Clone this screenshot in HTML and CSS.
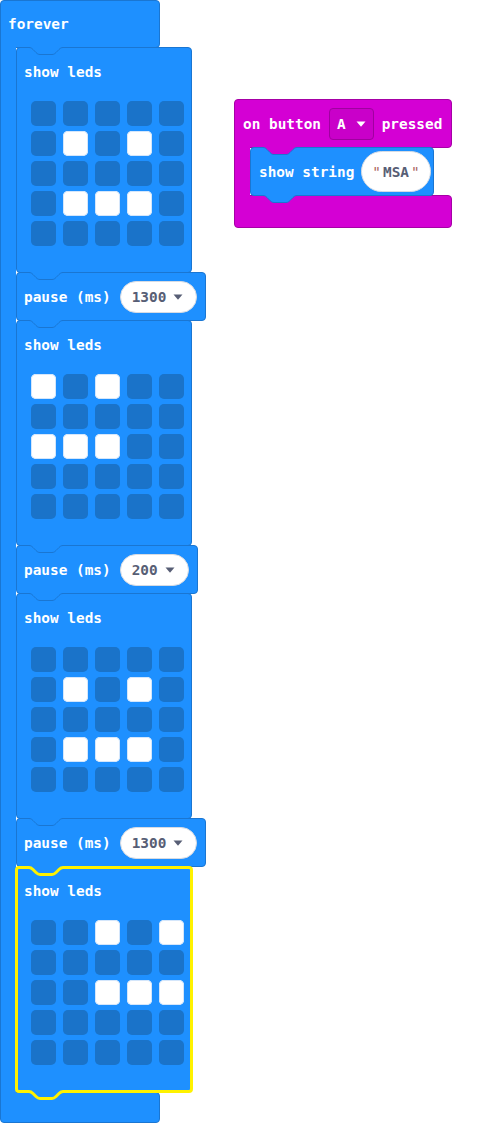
FILE: index.html
```html
<!DOCTYPE html>
<html lang="en">
<head>
  <meta charset="UTF-8" />
  <title>Blocks</title>
  <link rel="stylesheet" href="styles.css">
</head>
<body>
  <div class="workspace">

    <div class="c-block forever">
      <div class="c-head"><span>forever</span></div>
      <div class="c-body">
        <div class="c-arm"></div>
        <div class="stack">

          <div class="stmt leds-block">
            <svg class="notch" width="34" height="9"><path class="n-fill" d="M0,0 V0.5 C2,0.5 3,1.5 4,2.5 L7,5.5 C8,6.5 9,7.5 11,7.5 H23 C25,7.5 26,6.5 27,5.5 L30,2.5 C31,1.5 32,0.5 34,0.5 V0 Z"/><path class="n-line" d="M0,0.5 C2,0.5 3,1.5 4,2.5 L7,5.5 C8,6.5 9,7.5 11,7.5 H23 C25,7.5 26,6.5 27,5.5 L30,2.5 C31,1.5 32,0.5 34,0.5"/></svg>
            <div class="label">show leds</div>
            <div class="leds">
              <i class="led"></i><i class="led"></i><i class="led"></i><i class="led"></i><i class="led"></i>
              <i class="led"></i><i class="led on"></i><i class="led"></i><i class="led on"></i><i class="led"></i>
              <i class="led"></i><i class="led"></i><i class="led"></i><i class="led"></i><i class="led"></i>
              <i class="led"></i><i class="led on"></i><i class="led on"></i><i class="led on"></i><i class="led"></i>
              <i class="led"></i><i class="led"></i><i class="led"></i><i class="led"></i><i class="led"></i>
            </div>
          </div>

          <div class="stmt pause-block">
            <svg class="notch" width="34" height="9"><path class="n-fill" d="M0,0 V0.5 C2,0.5 3,1.5 4,2.5 L7,5.5 C8,6.5 9,7.5 11,7.5 H23 C25,7.5 26,6.5 27,5.5 L30,2.5 C31,1.5 32,0.5 34,0.5 V0 Z"/><path class="n-line" d="M0,0.5 C2,0.5 3,1.5 4,2.5 L7,5.5 C8,6.5 9,7.5 11,7.5 H23 C25,7.5 26,6.5 27,5.5 L30,2.5 C31,1.5 32,0.5 34,0.5"/></svg>
            <span class="label">pause (ms)</span>
            <span class="pill num">1300<svg class="caret" width="10" height="6"><path d="M0.5,0.5 H9.5 L5,5.8 Z"/></svg></span>
          </div>

          <div class="stmt leds-block">
            <svg class="notch" width="34" height="9"><path class="n-fill" d="M0,0 V0.5 C2,0.5 3,1.5 4,2.5 L7,5.5 C8,6.5 9,7.5 11,7.5 H23 C25,7.5 26,6.5 27,5.5 L30,2.5 C31,1.5 32,0.5 34,0.5 V0 Z"/><path class="n-line" d="M0,0.5 C2,0.5 3,1.5 4,2.5 L7,5.5 C8,6.5 9,7.5 11,7.5 H23 C25,7.5 26,6.5 27,5.5 L30,2.5 C31,1.5 32,0.5 34,0.5"/></svg>
            <div class="label">show leds</div>
            <div class="leds">
              <i class="led on"></i><i class="led"></i><i class="led on"></i><i class="led"></i><i class="led"></i>
              <i class="led"></i><i class="led"></i><i class="led"></i><i class="led"></i><i class="led"></i>
              <i class="led on"></i><i class="led on"></i><i class="led on"></i><i class="led"></i><i class="led"></i>
              <i class="led"></i><i class="led"></i><i class="led"></i><i class="led"></i><i class="led"></i>
              <i class="led"></i><i class="led"></i><i class="led"></i><i class="led"></i><i class="led"></i>
            </div>
          </div>

          <div class="stmt pause-block">
            <svg class="notch" width="34" height="9"><path class="n-fill" d="M0,0 V0.5 C2,0.5 3,1.5 4,2.5 L7,5.5 C8,6.5 9,7.5 11,7.5 H23 C25,7.5 26,6.5 27,5.5 L30,2.5 C31,1.5 32,0.5 34,0.5 V0 Z"/><path class="n-line" d="M0,0.5 C2,0.5 3,1.5 4,2.5 L7,5.5 C8,6.5 9,7.5 11,7.5 H23 C25,7.5 26,6.5 27,5.5 L30,2.5 C31,1.5 32,0.5 34,0.5"/></svg>
            <span class="label">pause (ms)</span>
            <span class="pill num">200<svg class="caret" width="10" height="6"><path d="M0.5,0.5 H9.5 L5,5.8 Z"/></svg></span>
          </div>

          <div class="stmt leds-block">
            <svg class="notch" width="34" height="9"><path class="n-fill" d="M0,0 V0.5 C2,0.5 3,1.5 4,2.5 L7,5.5 C8,6.5 9,7.5 11,7.5 H23 C25,7.5 26,6.5 27,5.5 L30,2.5 C31,1.5 32,0.5 34,0.5 V0 Z"/><path class="n-line" d="M0,0.5 C2,0.5 3,1.5 4,2.5 L7,5.5 C8,6.5 9,7.5 11,7.5 H23 C25,7.5 26,6.5 27,5.5 L30,2.5 C31,1.5 32,0.5 34,0.5"/></svg>
            <div class="label">show leds</div>
            <div class="leds">
              <i class="led"></i><i class="led"></i><i class="led"></i><i class="led"></i><i class="led"></i>
              <i class="led"></i><i class="led on"></i><i class="led"></i><i class="led on"></i><i class="led"></i>
              <i class="led"></i><i class="led"></i><i class="led"></i><i class="led"></i><i class="led"></i>
              <i class="led"></i><i class="led on"></i><i class="led on"></i><i class="led on"></i><i class="led"></i>
              <i class="led"></i><i class="led"></i><i class="led"></i><i class="led"></i><i class="led"></i>
            </div>
          </div>

          <div class="stmt pause-block">
            <svg class="notch" width="34" height="9"><path class="n-fill" d="M0,0 V0.5 C2,0.5 3,1.5 4,2.5 L7,5.5 C8,6.5 9,7.5 11,7.5 H23 C25,7.5 26,6.5 27,5.5 L30,2.5 C31,1.5 32,0.5 34,0.5 V0 Z"/><path class="n-line" d="M0,0.5 C2,0.5 3,1.5 4,2.5 L7,5.5 C8,6.5 9,7.5 11,7.5 H23 C25,7.5 26,6.5 27,5.5 L30,2.5 C31,1.5 32,0.5 34,0.5"/></svg>
            <span class="label">pause (ms)</span>
            <span class="pill num">1300<svg class="caret" width="10" height="6"><path d="M0.5,0.5 H9.5 L5,5.8 Z"/></svg></span>
          </div>

          <div class="stmt leds-block selected">
            <svg class="notch" width="34" height="11"><path class="n-fill" d="M0,0 V1.5 C2,1.5 3,2.5 4,3.5 L7,6.5 C8,7.5 9,8.5 11,8.5 H23 C25,8.5 26,7.5 27,6.5 L30,3.5 C31,2.5 32,1.5 34,1.5 V0 Z"/><path class="n-line" d="M0,1.5 C2,1.5 3,2.5 4,3.5 L7,6.5 C8,7.5 9,8.5 11,8.5 H23 C25,8.5 26,7.5 27,6.5 L30,3.5 C31,2.5 32,1.5 34,1.5"/></svg>
            <div class="label">show leds</div>
            <div class="leds">
              <i class="led"></i><i class="led"></i><i class="led on"></i><i class="led"></i><i class="led on"></i>
              <i class="led"></i><i class="led"></i><i class="led"></i><i class="led"></i><i class="led"></i>
              <i class="led"></i><i class="led"></i><i class="led on"></i><i class="led on"></i><i class="led on"></i>
              <i class="led"></i><i class="led"></i><i class="led"></i><i class="led"></i><i class="led"></i>
              <i class="led"></i><i class="led"></i><i class="led"></i><i class="led"></i><i class="led"></i>
            </div>
            <svg class="tab" width="34" height="11"><path class="n-fill" d="M0,0 V1.5 C2,1.5 3,2.5 4,3.5 L7,6.5 C8,7.5 9,8.5 11,8.5 H23 C25,8.5 26,7.5 27,6.5 L30,3.5 C31,2.5 32,1.5 34,1.5 V0 Z"/><path class="n-line" d="M0,1.5 C2,1.5 3,2.5 4,3.5 L7,6.5 C8,7.5 9,8.5 11,8.5 H23 C25,8.5 26,7.5 27,6.5 L30,3.5 C31,2.5 32,1.5 34,1.5"/></svg>
          </div>

        </div>
      </div>
      <div class="c-foot"></div>
    </div>

    <div class="c-block event">
      <div class="c-head">
        <span>on button</span>
        <span class="dropdown">A<svg class="caret" width="10" height="6"><path d="M0.5,0.5 H9.5 L5,5.8 Z"/></svg></span>
        <span>pressed</span>
      </div>
      <div class="c-body">
        <div class="c-arm"></div>
        <div class="stack">
          <div class="stmt string-block">
            <svg class="notch" width="34" height="9"><path class="n-fill" d="M0,0 V0.5 C2,0.5 3,1.5 4,2.5 L7,5.5 C8,6.5 9,7.5 11,7.5 H23 C25,7.5 26,6.5 27,5.5 L30,2.5 C31,1.5 32,0.5 34,0.5 V0 Z"/><path class="n-line" d="M0,0.5 C2,0.5 3,1.5 4,2.5 L7,5.5 C8,6.5 9,7.5 11,7.5 H23 C25,7.5 26,6.5 27,5.5 L30,2.5 C31,1.5 32,0.5 34,0.5"/></svg>
            <span class="label">show string</span>
            <span class="pill str"><span class="quote">"</span>MSA<span class="quote">"</span></span>
            <svg class="tab" width="34" height="9"><path class="n-fill" d="M0,0 V0.5 C2,0.5 3,1.5 4,2.5 L7,5.5 C8,6.5 9,7.5 11,7.5 H23 C25,7.5 26,6.5 27,5.5 L30,2.5 C31,1.5 32,0.5 34,0.5 V0 Z"/><path class="n-line" d="M0,0.5 C2,0.5 3,1.5 4,2.5 L7,5.5 C8,6.5 9,7.5 11,7.5 H23 C25,7.5 26,6.5 27,5.5 L30,2.5 C31,1.5 32,0.5 34,0.5"/></svg>
          </div>
        </div>
      </div>
      <div class="c-foot"></div>
    </div>

  </div>
</body>
</html>
```

FILE: styles.css
```css
:root {
  --blue: #1e90ff;
  --blue-edge: #1a76d2;
  --led-off: #1a73c9;
  --pink: #d400d4;
  --pink-edge: #a600a6;
  --field-text: #575e75;
  --select: #fff200;
}

body {
  margin: 0;
  background: #fff;
  font-family: "DejaVu Sans Mono", "Liberation Mono", monospace;
  font-size: 14.4px;
  font-weight: bold;
  color: #fff;
}

.workspace {
  position: relative;
  width: 487px;
  height: 1124px;
  overflow: hidden;
}

/* top level blocks sit on the canvas */
.c-block {
  position: absolute;
  display: flex;
  flex-direction: column;
  align-items: flex-start;
}

.forever {
  left: 0;
  top: 0;
  --fill: var(--blue);
  --edge: var(--blue-edge);
}

.event {
  left: 234px;
  top: 99px;
  --fill: var(--pink);
  --edge: var(--pink-edge);
}

.c-head,
.c-foot {
  box-sizing: border-box;
  background: var(--fill);
  border: 1px solid var(--edge);
}

.c-head {
  display: flex;
  align-items: center;
  gap: 8px;
  height: 48px;
  padding: 0 7px;
  border-radius: 4px 4px 4px 0;
}

.forever .c-head { width: 160px; }

.event .c-head {
  width: 218px;
  height: 49px;
  padding: 0 8px;
}

.c-body {
  display: flex;
  margin-top: -1px;
}

.c-arm {
  position: relative;
  width: 16px;
  box-sizing: border-box;
  background: var(--fill);
  border-left: 1px solid var(--edge);
}

.stack {
  display: flex;
  flex-direction: column;
  align-items: flex-start;
}

.c-foot {
  margin-top: -1px;
  border-radius: 0 4px 4px 4px;
}

.forever .c-foot {
  width: 160px;
  height: 31px;
}

.event .c-foot {
  width: 218px;
  height: 33px;
}

/* statement blocks */
.stmt {
  position: relative;
  z-index: 1;
  box-sizing: border-box;
  background: var(--blue);
  border: 1px solid var(--blue-edge);
  border-radius: 4px;
}

.stmt + .stmt { margin-top: -1px; }

.notch,
.tab {
  position: absolute;
  left: 12px;
  overflow: visible;
}

.notch { top: -1px; }
.tab { top: 100%; }

.n-fill { fill: var(--fill); }
.n-line {
  fill: none;
  stroke: var(--blue-edge);
  stroke-width: 1;
}

.tab .n-fill { fill: var(--blue); }

.label {
  line-height: 18px;
  white-space: nowrap;
}

.leds-block {
  width: 176px;
  height: 226px;
  padding: 15px 7px 0;
}

.leds-block.selected {
  width: 178px;
  height: 227px;
  margin-left: -1px;
  padding: 13px 6px 0;
  border: 3px solid var(--select);
}

.selected .notch { top: -3px; left: 11px; }
.selected .tab { left: 11px; }
.selected .n-line {
  stroke: var(--select);
  stroke-width: 3;
}

.leds {
  display: grid;
  grid-template-columns: repeat(5, 25px);
  grid-auto-rows: 25px;
  column-gap: 7px;
  row-gap: 5px;
  margin: 20px 0 0 7px;
}

.led {
  border-radius: 5px;
  background: var(--led-off);
}

.led.on {
  background: #fff;
  box-shadow: inset 0 0 0 1px #d4e6fb;
}

.pause-block {
  display: flex;
  align-items: center;
  gap: 9px;
  height: 49px;
  padding: 0 8px 0 7px;
}

.string-block {
  display: flex;
  align-items: center;
  gap: 7px;
  width: 184px;
  height: 49px;
  padding: 0 6px 0 8px;
}

.pill {
  display: inline-flex;
  align-items: center;
  box-sizing: border-box;
  background: #fff;
  border: 1px solid #d6dbe3;
  color: var(--field-text);
}

.num {
  height: 32px;
  gap: 7px;
  padding: 0 13px 0 11px;
  border-radius: 16px;
}

.str {
  height: 41px;
  padding: 0 8px;
  border-radius: 21px;
}

.quote {
  margin: 0 2px;
  font-weight: normal;
  color: #a8625c;
}

.caret path { fill: var(--field-text); }

.dropdown {
  display: inline-flex;
  align-items: center;
  gap: 10px;
  box-sizing: border-box;
  height: 32px;
  padding: 0 7px;
  background: #c900c9;
  border: 1px solid #a000a0;
  border-radius: 4px;
}

.dropdown .caret path { fill: #fff; }
```
